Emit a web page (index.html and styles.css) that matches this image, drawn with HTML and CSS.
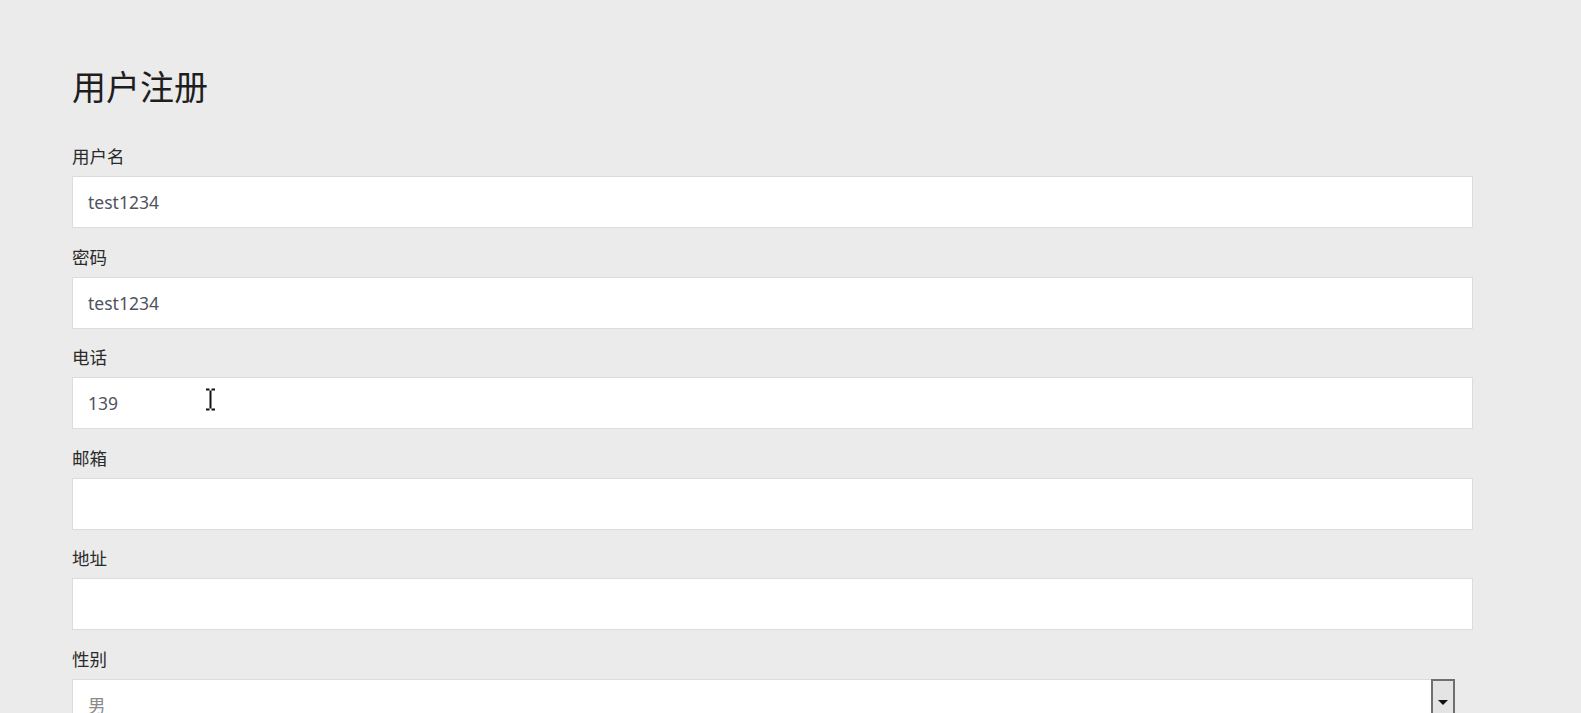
FILE: index.html
```html
<!DOCTYPE html>
<html lang="zh-CN">
<head>
    <meta charset="UTF-8">
    <meta name="viewport" content="width=device-width, initial-scale=1.0">
    <title>用户注册</title>
    <link rel="stylesheet" href="styles.css">
</head>
<body>
    <main class="register">
        <h1 class="titulo">用户注册</h1>
        <form class="form-registro">
            <div class="campo">
                <label for="username">用户名</label>
                <input type="text" id="username" name="username" value="test1234">
            </div>
            <div class="campo">
                <label for="password">密码</label>
                <input type="text" id="password" name="password" value="test1234">
            </div>
            <div class="campo">
                <label for="phone">电话</label>
                <div class="input-wrap">
                    <input type="text" id="phone" name="phone" value="139">
                    <!-- cursor do mouse -->
                    <svg class="ibeam" width="11" height="23" viewBox="0 0 11 23">
                        <path d="M1 1.5h3.5M6.5 1.5H10M5.5 2.5v18M1 21.5h3.5M6.5 21.5H10" stroke="#111" stroke-width="2" fill="none"/>
                    </svg>
                </div>
            </div>
            <div class="campo">
                <label for="email">邮箱</label>
                <input type="text" id="email" name="email">
            </div>
            <div class="campo">
                <label for="address">地址</label>
                <input type="text" id="address" name="address">
            </div>
            <div class="campo">
                <label for="sex">性别</label>
                <div class="select-box">
                    <select id="sex" name="sex">
                        <option>男</option>
                        <option>女</option>
                    </select>
                    <span class="select-btn"><span class="seta"></span></span>
                </div>
            </div>
        </form>
    </main>
</body>
</html>
```

FILE: styles.css
```css
html, body {
    margin: 0;
    overflow: hidden;
}

body {
    background-color: #ebebeb;
    font-family: "Noto Sans", "Noto Sans CJK SC", sans-serif;
    color: #333;
}

.register {
    padding: 67px 108px 0 72px;
}

.titulo {
    margin: 0 0 37px;
    font-size: 34px;
    line-height: 40px;
    font-weight: normal;
    color: #1e1e1e;
}

.campo {
    margin-bottom: 16.6px;
}

.campo label {
    display: block;
    font-size: 17.5px;
    line-height: 24px;
    margin-bottom: 8px;
    color: #2a2a2a;
}

.campo input {
    display: block;
    width: 100%;
    height: 52px;
    box-sizing: border-box;
    padding: 0 15px;
    border: 1px solid #dcdcdc;
    background-color: #fff;
    font-family: "Noto Sans", "Noto Sans CJK SC", sans-serif;
    font-size: 17.5px;
    color: #4f5360;
    outline: none;
}

.input-wrap {
    position: relative;
}

.ibeam {
    position: absolute;
    left: 133px;
    top: 11px;
}

.select-box {
    display: flex;
    width: 1383px;
    height: 52px;
}

.select-box select {
    flex: 1;
    appearance: none;
    -webkit-appearance: none;
    height: 100%;
    padding: 0 15px;
    border: 1px solid #dcdcdc;
    border-right: none;
    border-radius: 0;
    background-color: #fff;
    font-family: "Noto Sans", "Noto Sans CJK SC", sans-serif;
    font-size: 17.5px;
    color: #8a8a8a;
    outline: none;
}

.select-btn {
    width: 24px;
    box-sizing: border-box;
    border: 2px solid #6f6f6f;
    border-bottom: none;
    background-color: #e4e4e4;
    display: flex;
    justify-content: center;
    padding-top: 19px;
}

.seta {
    width: 0;
    height: 0;
    border-left: 5px solid transparent;
    border-right: 5px solid transparent;
    border-top: 5px solid #111;
}
```
